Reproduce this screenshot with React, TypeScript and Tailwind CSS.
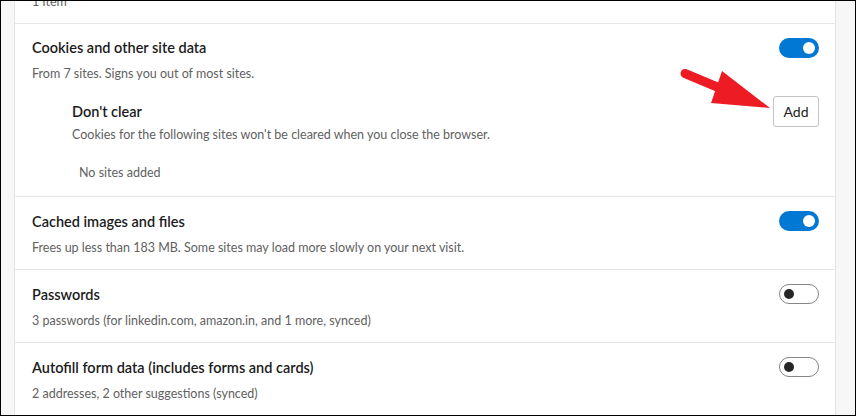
import React from 'react';

type Row = { title: string; desc: string; on: boolean };

const rows: Row[] = [
  {
    title: 'Cached images and files',
    desc: 'Frees up less than 183 MB. Some sites may load more slowly on your next visit.',
    on: true,
  },
  {
    title: 'Passwords',
    desc: '3 passwords (for linkedin.com, amazon.in, and 1 more, synced)',
    on: false,
  },
  {
    title: 'Autofill form data (includes forms and cards)',
    desc: '2 addresses, 2 other suggestions (synced)',
    on: false,
  },
];

function Toggle({ on }: { on: boolean }) {
  if (on) {
    return (
      <div className="relative w-10 h-5 shrink-0 rounded-full bg-[#0078d4]">
        <span className="absolute right-[4px] top-[4px] w-3 h-3 rounded-full bg-white" />
      </div>
    );
  }
  return (
    <div className="relative w-10 h-5 shrink-0 rounded-full border border-[#858585] bg-white">
      <span className="absolute left-[4px] top-[4px] w-[10px] h-[10px] rounded-full bg-[#262626]" />
    </div>
  );
}

function SettingRow({ row }: { row: Row }) {
  return (
    <div className="flex items-start justify-between border-t border-[#e6e6e6] pl-[17px] pr-4 pt-[14px] pb-[11px]">
      <div>
        <div className="text-[14.5px] leading-[22px] font-semibold text-[#1b1b1b]">{row.title}</div>
        <div className="mt-[5px] text-[12.5px] leading-5 text-[#616161]">{row.desc}</div>
      </div>
      <Toggle on={row.on} />
    </div>
  );
}

export default function App() {
  return (
    <div className="relative w-[856px] h-[416px] overflow-hidden border border-black bg-[#f7f7f7] font-['Lato','Liberation_Sans',sans-serif]">
      <div className="ml-[13px] w-[822px] h-full bg-white border-x border-[#e3e3e3]">
        {/* cut-off row above */}
        <div className="h-[22px] overflow-hidden pl-[17px]">
          <div className="-mt-[9px] text-[12.5px] leading-5 text-[#616161]">1 item</div>
        </div>

        {/* Cookies */}
        <div className="border-t border-[#e6e6e6] pl-[17px] pr-4 pt-[13px] pb-[13px]">
          <div className="flex items-start justify-between">
            <div>
              <div className="text-[14.5px] leading-[22px] font-semibold text-[#1b1b1b]">
                Cookies and other site data
              </div>
              <div className="mt-[5px] text-[12.5px] leading-5 text-[#616161]">
                From 7 sites. Signs you out of most sites.
              </div>
            </div>
            <div className="mt-px">
              <Toggle on />
            </div>
          </div>

          <div className="mt-[17px] ml-10 flex items-start justify-between">
            <div>
              <div className="text-[14.5px] leading-[22px] font-semibold text-[#1b1b1b]">Don't clear</div>
              <div className="mt-[2px] text-[12.5px] leading-5 text-[#616161]">
                Cookies for the following sites won't be cleared when you close the browser.
              </div>
              <div className="mt-[18px] ml-[7px] text-[12.5px] leading-5 text-[#616161]">No sites added</div>
            </div>
            <button className="-mt-[5px] w-[46px] h-[31px] rounded-[3px] border border-[#c4c4c4] bg-white text-[14px] text-[#1b1b1b]">
              Add
            </button>
          </div>
        </div>

        {rows.map((row) => (
          <SettingRow key={row.title} row={row} />
        ))}
      </div>

      {/* red annotation arrow */}
      <svg
        className="absolute -left-px -top-px w-[856px] h-[416px] pointer-events-none"
        viewBox="0 0 856 416"
      >
        <line x1="685" y1="73.5" x2="722" y2="89" stroke="#ed1c24" strokeWidth="9" strokeLinecap="round" />
        <polygon points="722,71 770,108 711,103" fill="#ed1c24" />
      </svg>
    </div>
  );
}
